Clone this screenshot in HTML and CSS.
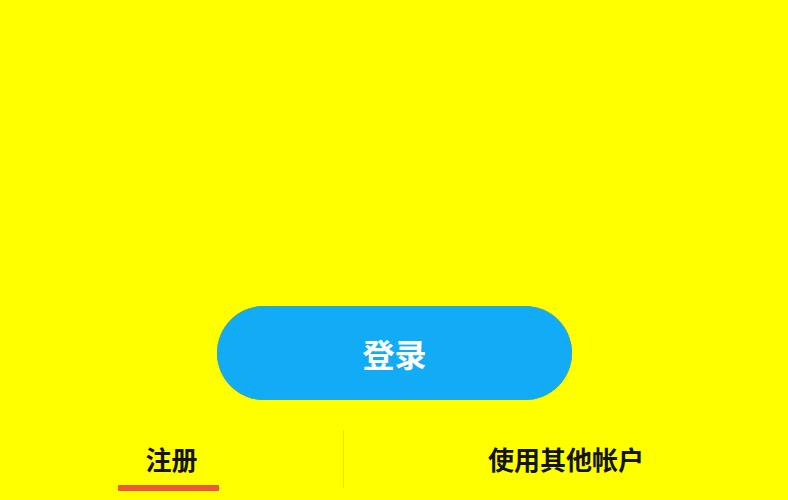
FILE: index.html
```html
<!DOCTYPE html>
<html lang="zh-CN">
<head>
<meta charset="utf-8">
<title>登录</title>
<link rel="stylesheet" href="styles.css">
</head>
<body>
<div class="page">
  <div class="actions">
    <button class="login-btn">登录</button>
  </div>
  <nav class="tabs">
    <div class="tab tab-active">
      <span class="tab-label">注册</span>
      <span class="tab-underline"></span>
    </div>
    <div class="divider"></div>
    <div class="tab">
      <span class="tab-label">使用其他帐户</span>
    </div>
  </nav>
</div>
</body>
</html>
```

FILE: styles.css
```css
html, body {
  margin: 0;
  padding: 0;
  background: #ffff00;
}
body {
  font-family: "Noto Sans CJK SC", "Noto Sans", sans-serif;
}
.page {
  height: 500px;
  display: flex;
  flex-direction: column;
  justify-content: flex-end;
  overflow: hidden;
}
.actions {
  display: flex;
  justify-content: center;
  padding-left: 1px;
  margin-bottom: 30px;
}
.login-btn {
  width: 355px;
  height: 94px;
  border: none;
  border-radius: 47px;
  background: #12acf6;
  box-shadow: 0 0 0 1px #3aa6b8 inset;
  color: #ffffff;
  font-family: "Noto Sans CJK SC", sans-serif;
  font-size: 32px;
  font-weight: 700;
  line-height: 1;
  padding: 0;
}
.tabs {
  display: grid;
  grid-template-columns: 343px 1px 1fr;
  height: 70px;
}
.tab {
  display: flex;
  flex-direction: column;
  align-items: center;
  padding-top: 14px;
}
.tab-label {
  font-size: 26px;
  line-height: 30px;
  font-weight: 700;
  color: #141414;
}
.tab-underline {
  width: 101px;
  height: 6px;
  margin-top: 11px;
  margin-right: 7px;
  background: #e95a3a;
  border-radius: 1px;
}
.divider {
  height: 58px;
  background: #e4e400;
}
```
